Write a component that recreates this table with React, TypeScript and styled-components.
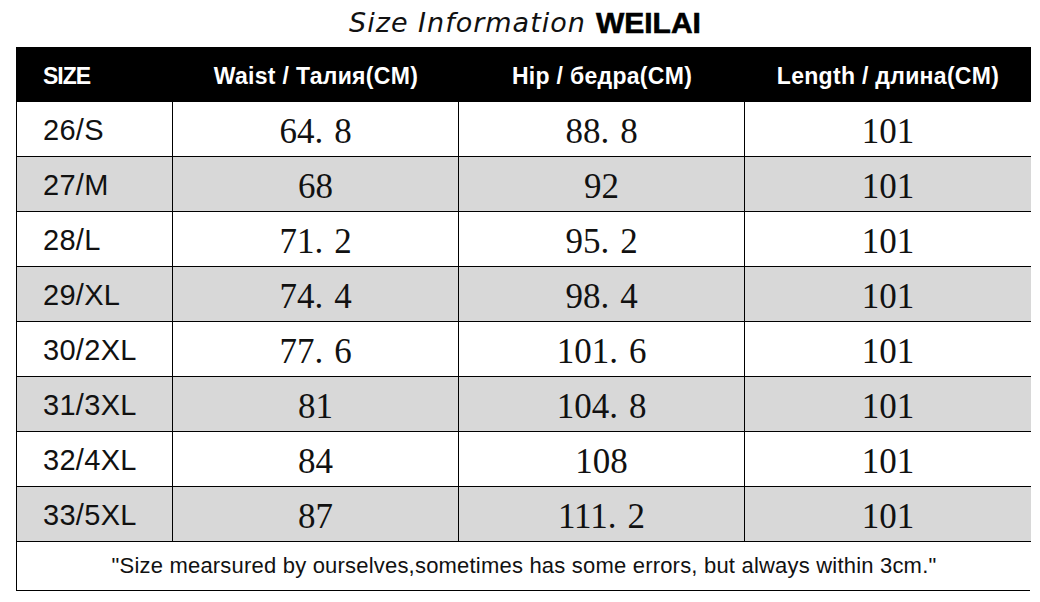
import styled, { createGlobalStyle } from 'styled-components'

const rows = [
  { size: '26/S', waist: '64.8', hip: '88.8', length: '101' },
  { size: '27/M', waist: '68', hip: '92', length: '101' },
  { size: '28/L', waist: '71.2', hip: '95.2', length: '101' },
  { size: '29/XL', waist: '74.4', hip: '98.4', length: '101' },
  { size: '30/2XL', waist: '77.6', hip: '101.6', length: '101' },
  { size: '31/3XL', waist: '81', hip: '104.8', length: '101' },
  { size: '32/4XL', waist: '84', hip: '108', length: '101' },
  { size: '33/5XL', waist: '87', hip: '111.2', length: '101' },
]

const GlobalStyle = createGlobalStyle`
  html, body {
    margin: 0;
    padding: 0;
    background: #ffffff;
  }
`

// the source uses a wide full-stop, so give the dot some room after it
function Measure({ value }: { value: string }) {
  const [whole, frac] = value.split('.')
  if (frac === undefined) return <>{whole}</>
  return (
    <>
      {whole}
      <Dot>.</Dot>
      {frac}
    </>
  )
}

export default function App() {
  return (
    <Page>
      <GlobalStyle />
      <Title>
        <Script>Size Information</Script>
        <Brand>WEILAI</Brand>
      </Title>
      <Table>
        <HeadCell $left>SIZE</HeadCell>
        <HeadCell>Waist / Талия(CM)</HeadCell>
        <HeadCell>Hip / бедра(CM)</HeadCell>
        <HeadCell $last>Length / длина(CM)</HeadCell>
        {rows.map((r, i) => (
          <Row key={r.size} $grey={i % 2 === 1}>
            <SizeCell>{r.size}</SizeCell>
            <NumCell>
              <Measure value={r.waist} />
            </NumCell>
            <NumCell>
              <Measure value={r.hip} />
            </NumCell>
            <NumCell $last>
              <Measure value={r.length} />
            </NumCell>
          </Row>
        ))}
        <Note>"Size mearsured by ourselves,sometimes has some errors, but always within 3cm."</Note>
      </Table>
    </Page>
  )
}

const Page = styled.div`
  width: 1040px;
  height: 602px;
  background: #fff;
  padding: 0 10px 0 16px;
  box-sizing: border-box;
`

const Title = styled.div`
  height: 47px;
  display: flex;
  justify-content: center;
  align-items: center;
  gap: 10px;
  padding-left: 4px;
  padding-bottom: 2px;
  box-sizing: border-box;
  color: #111;
`

const Script = styled.span`
  font-family: 'DejaVu Sans', sans-serif;
  font-style: italic;
  font-weight: 300;
  font-size: 27px;
  letter-spacing: 1px;
`

const Brand = styled.span`
  font-family: 'Liberation Sans', Arial, sans-serif;
  font-weight: bold;
  font-size: 30px;
  color: #000;
  -webkit-text-stroke: 0.6px #000;
`

const Table = styled.div`
  display: grid;
  grid-template-columns: 156px 286px 286px 286px;
  grid-template-rows: repeat(9, 55px) 48px;
  width: 1014px;
  border: 1.5px solid #000;
  border-top: none;
  box-sizing: border-box;
`

const HeadCell = styled.div<{ $left?: boolean; $last?: boolean }>`
  background: #000;
  color: #fff;
  font-family: 'Liberation Sans', Arial, sans-serif;
  font-weight: bold;
  font-size: 23px;
  letter-spacing: ${(p) => (p.$left ? '-1px' : '0.3px')};
  display: flex;
  align-items: center;
  justify-content: ${(p) => (p.$left ? 'flex-start' : 'center')};
  padding-left: ${(p) => (p.$left ? '26px' : '0')};
  padding-top: 4px;
  box-sizing: border-box;
`

const Row = styled.div<{ $grey: boolean }>`
  display: contents;

  & > div {
    background: ${(p) => (p.$grey ? '#d8d8d8' : '#ffffff')};
  }
`

const Cell = styled.div<{ $last?: boolean }>`
  display: flex;
  align-items: center;
  border-bottom: 1.5px solid #000;
  border-right: ${(p) => (p.$last ? 'none' : '1.5px solid #000')};
  box-sizing: border-box;
  color: #111;
`

const SizeCell = styled(Cell)`
  font-family: 'Liberation Sans', Arial, sans-serif;
  font-size: 29px;
  letter-spacing: 0.3px;
  padding-left: 26px;
  padding-top: 3px;
`

const NumCell = styled(Cell)`
  font-family: 'Liberation Serif', serif;
  font-size: 35px;
  justify-content: center;
  padding-top: 6px;
`

const Dot = styled.span`
  margin-right: 11px;
`

const Note = styled.div`
  grid-column: 1 / -1;
  display: flex;
  align-items: center;
  justify-content: center;
  font-family: 'Liberation Sans', Arial, sans-serif;
  font-size: 22px;
  letter-spacing: 0.2px;
  color: #111;
  background: #fff;
`
